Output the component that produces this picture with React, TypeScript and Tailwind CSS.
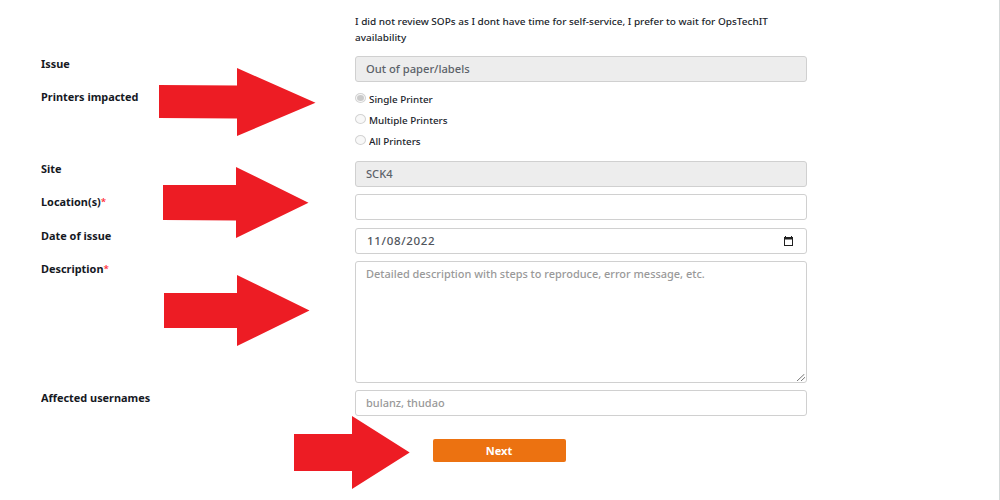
import type { ReactNode } from "react";

function Row({ label, required, className, children }: { label: string; required?: boolean; className: string; children: ReactNode }) {
  return (
    <div className={`flex shrink-0 items-start ${className}`}>
      <div className="w-[314px] shrink-0 text-[10px] leading-[16px] font-bold whitespace-nowrap text-[#16191f]">
        <span className="inline-block origin-left scale-x-[1.09]">
          {label}
          {required && <span className="align-[1px] text-[9px] leading-[8px] font-medium text-[#ff1a2e]">*</span>}
        </span>
      </div>
      {children}
    </div>
  );
}

const field = "flex h-[26px] w-[452px] shrink-0 items-center rounded-[3px] border border-[#d0d0d0] px-[10px] pt-[2px] text-[10.5px] font-medium";

function Radio({ label, checked }: { label: string; checked?: boolean }) {
  return (
    <div className="flex h-[21.2px] items-start">
      <span className="flex h-[10px] w-[11px] items-center justify-center rounded-[50%] border border-[#d3d3d3] bg-[#f8f8f8]">
        {checked && <span className="h-[6px] w-[7px] rounded-[50%] bg-[#cacaca]" />}
      </span>
      <span className="ml-[3px] origin-left scale-x-[1.035] pt-px text-[9.5px] leading-[12px] font-medium text-[#20242b]">{label}</span>
    </div>
  );
}

function Arrow({ points }: { points: string }) {
  return <polygon points={points} fill="#ed1c24" />;
}

export default function App() {
  return (
    <div className="relative flex h-[500px] w-[1000px] flex-col overflow-hidden border-r border-[#d5d9d9] bg-white pl-[41px] font-['Noto_Sans','Open_Sans',sans-serif]">
      <p className="mt-[14px] ml-[314px] h-[42px] w-[452px] shrink-0 origin-left scale-x-[1.052] text-[9.5px] leading-[15.5px] font-medium text-[#20242b]">
        <span className="whitespace-nowrap">I did not review SOPs as I dont have time for self-service, I prefer to wait for OpsTechIT</span>
        <br />
        <span>availability</span>
      </p>
      <Row label="Issue" className="h-[33px]">
        <div className={`${field} bg-[#ededed] text-[#5c6269]`}>
          <span className="origin-left scale-x-[1.065]">Out of paper/labels</span>
        </div>
      </Row>
      <Row label="Printers impacted" className="h-[72px]">
        <div className="flex flex-col pt-[4px]">
          <Radio label="Single Printer" checked />
          <Radio label="Multiple Printers" />
          <Radio label="All Printers" />
        </div>
      </Row>
      <Row label="Site" className="h-[33px]">
        <div className={`${field} bg-[#ededed] text-[#5c6269]`}>
          <span className="origin-left scale-x-[1.06]">SCK4</span>
        </div>
      </Row>
      <Row label="Location(s)" required className="h-[34px]">
        <div className={`${field} bg-white`} />
      </Row>
      <Row label="Date of issue" className="h-[33px]">
        <div className={`${field} justify-between bg-white text-[#50555c]`}>
          <span className="ml-px origin-left scale-x-[1.1] tracking-[0.6px]">11/08/2022</span>
          <svg className="mr-[3px] mb-[2px] h-[10px] w-[9px]" viewBox="0 0 9 10">
            <path d="M1 0h1v1h5V0h1v1h1v9H0V1h1z M1 3.5v5.5h7V3.5z" fill="#202020" fillRule="evenodd" />
          </svg>
        </div>
      </Row>
      <Row label="Description" required className="h-[129px]">
        <div className="flex h-[122px] w-[452px] shrink-0 flex-col justify-between rounded-[3px] border border-[#d0d0d0] text-[#999]">
          <span className="ml-[10px] origin-left scale-x-[1.042] self-start pt-[4px] text-[10.5px] leading-[17px] font-medium whitespace-nowrap">Detailed description with steps to reproduce, error message, etc.</span>
          <svg className="mr-px mb-px h-[7px] w-[8px] self-end" viewBox="0 0 8 7">
            <path d="M0 7L7.5 0M4 7L8 3.2" stroke="#777" fill="none" />
          </svg>
        </div>
      </Row>
      <Row label="Affected usernames" className="h-[49px]">
        <div className={`${field} bg-white text-[#999]`}>
          <span className="origin-left scale-x-[1.045]">bulanz, thudao</span>
        </div>
      </Row>
      <button className="ml-[392px] h-[23px] w-[133px] shrink-0 rounded-[2px] bg-[#ec7211] pt-px text-[10px] leading-[22px] font-bold text-white">
        <span className="inline-block scale-x-[1.1]">Next</span>
      </button>
      <svg className="pointer-events-none absolute top-0 left-0 h-[500px] w-[1000px]" viewBox="0 0 1000 500">
        <Arrow points="159,85 237,85.5 237,68 315.5,102.7 237,136 237,118.5 159,118" />
        <Arrow points="163,185 236,185 236,167 308.5,202.7 236,238 236,220.5 163,220" />
        <Arrow points="164,293 237,293 237,275 309.5,310.6 237,346 237,328 164,328" />
        <Arrow points="294,434 352,434 352,416 409.7,452.5 352,489 352,471 294,471" />
      </svg>
    </div>
  );
}
